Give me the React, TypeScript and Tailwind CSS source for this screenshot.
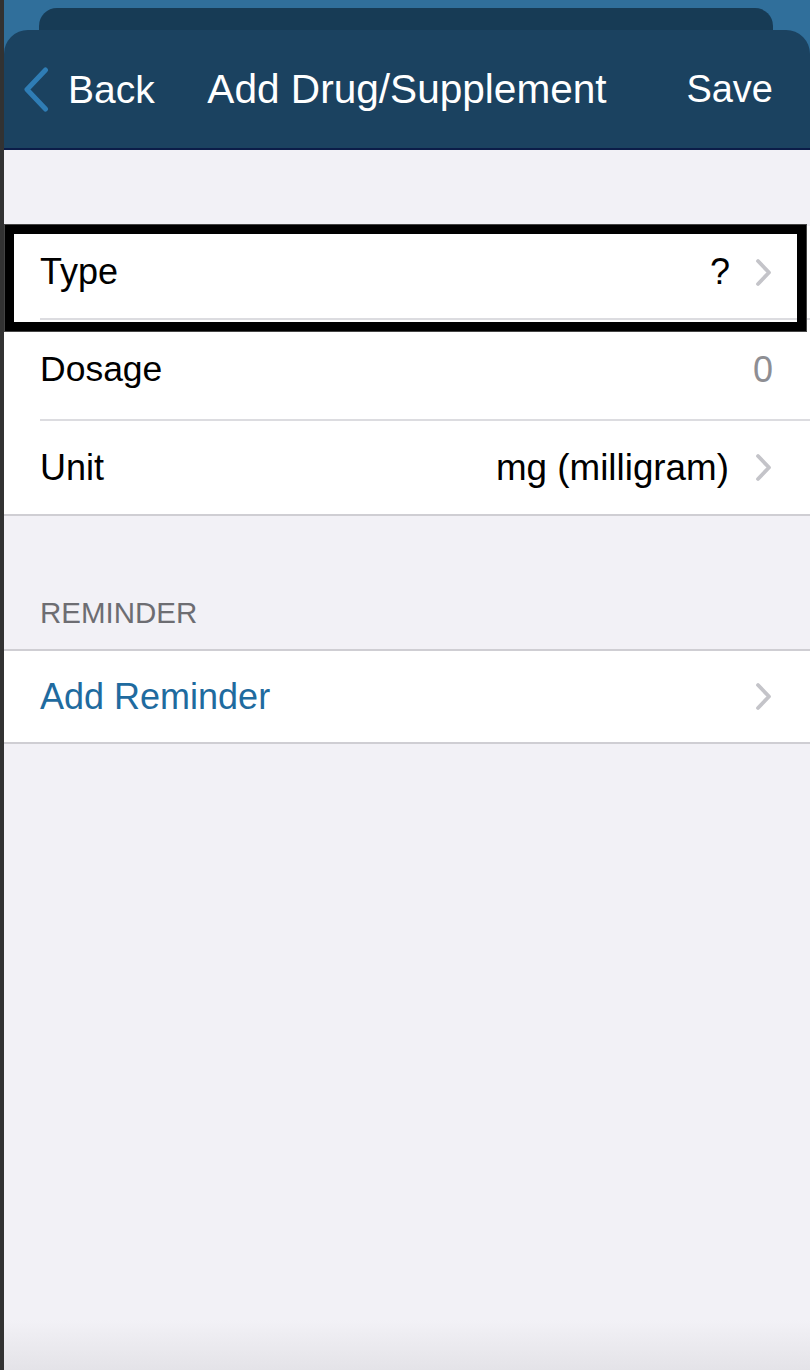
import React from "react";

const Chevron = () => (
  <svg width="17" height="29" viewBox="0 0 17 29" fill="none" className="shrink-0">
    <path d="M3 3 L14 14.5 L3 26" stroke="#c4c4c9" strokeWidth="3.8" strokeLinecap="round" strokeLinejoin="round" />
  </svg>
);

const BackChevron = () => (
  <svg width="26" height="45" viewBox="0 0 26 45" fill="none" className="shrink-0">
    <path d="M22.5 3 L4 22.5 L22.5 42" stroke="#2f7db5" strokeWidth="5" strokeLinecap="round" strokeLinejoin="round" />
  </svg>
);

export default function App() {
  return (
    <div
      className="flex h-[1370px] w-[810px] overflow-hidden bg-[#323232]"
      style={{ fontFamily: '"Liberation Sans", Arial, sans-serif' }}
    >
      <div className="w-[4px] shrink-0" />
      <div className="flex flex-1 flex-col bg-[#306f9b]">
        {/* stacked card behind */}
        <div className="h-[8px]" />
        <div className="ml-[35px] h-[22px] w-[734px] rounded-t-[18px] bg-[#173b55]" />
        {/* header */}
        <div className="grid h-[118px] grid-cols-[1fr_auto_1fr] items-center rounded-t-[24px] bg-[#1b4260] text-white">
          <div className="flex items-center gap-[19px] pl-[19px]">
            <BackChevron />
            <span className="text-[39px] leading-none">Back</span>
          </div>
          <div className="text-[40.6px] leading-none">Add Drug/Supplement</div>
          <div className="flex justify-end pr-[37px]">
            <span className="text-[38px] leading-none">Save</span>
          </div>
        </div>
        <div className="h-[2px] bg-[#0b1c48]" />
        {/* content */}
        <div className="flex flex-1 flex-col bg-[#f2f1f6]">
          <div className="h-[76px]" />
          {/* Type row with highlight */}
          <div className="relative z-10 bg-white">
            <div className="flex h-[92px] items-center pl-[36px] pr-[38px]">
              <span className="flex-1 text-[36px] text-black">Type</span>
              <span className="mr-[25px] text-[36px] text-black">?</span>
              <Chevron />
            </div>
            <div className="ml-[36px] h-[2px] bg-[#dcdce0]" />
            <div className="pointer-events-none absolute left-[1px] top-[-1px] h-[106px] w-[801px] border-[9px] border-black outline outline-1 outline-[#444]" />
          </div>
          {/* Dosage */}
          <div className="bg-white">
            <div className="flex h-[99px] items-center pl-[36px] pr-[37px]">
              <span className="flex-1 text-[35.5px] text-black">Dosage</span>
              <span className="text-[36px] text-[#8e8e93]">0</span>
            </div>
            <div className="ml-[36px] h-[2px] bg-[#dcdce0]" />
          </div>
          {/* Unit */}
          <div className="border-b-2 border-[#cfced3] bg-white">
            <div className="flex h-[93px] items-center pl-[36px] pr-[38px]">
              <span className="flex-1 text-[36px] text-black">Unit</span>
              <span className="mr-[26px] text-[36.8px] text-black">mg (milligram)</span>
              <Chevron />
            </div>
          </div>
          {/* Reminder header */}
          <div className="flex h-[133px] items-end pb-[22px] pl-[36px]">
            <span className="text-[29.5px] leading-none text-[#6d6d72]">REMINDER</span>
          </div>
          <div className="border-y-2 border-[#cfced3] bg-white">
            <div className="flex h-[91px] items-center pl-[36px] pr-[38px]">
              <span className="flex-1 text-[36px] text-[#1f6b9f]">Add Reminder</span>
              <Chevron />
            </div>
          </div>
          <div className="flex-1" />
          <div className="h-[50px] bg-gradient-to-b from-[#f2f1f6] to-[#e4e3e8]" />
        </div>
      </div>
    </div>
  );
}
